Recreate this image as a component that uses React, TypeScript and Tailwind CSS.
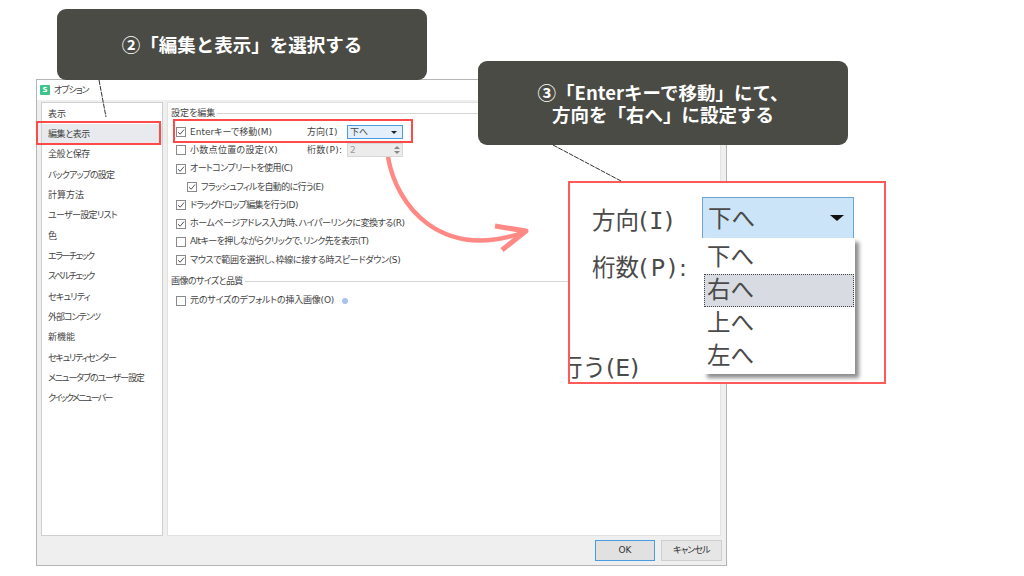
const jp = "font-['DejaVu_Sans','Noto_Sans_CJK_JP',sans-serif]";

// the reference's kana are much narrower than Noto's, so each label gets its own tracking
const navItems = [
  { label: "表示", track: "tracking-[0px]" },
  { label: "編集と表示", track: "tracking-[-0.4px]" },
  { label: "全般と保存", track: "tracking-[-0.4px]" },
  { label: "バックアップの設定", track: "tracking-[-0.9px]" },
  { label: "計算方法", track: "tracking-[0px]" },
  { label: "ユーザー設定リスト", track: "tracking-[-0.7px]" },
  { label: "色", track: "tracking-[0px]" },
  { label: "エラーチェック", track: "tracking-[-1.5px]" },
  { label: "スペルチェック", track: "tracking-[-1.4px]" },
  { label: "セキュリティ", track: "tracking-[-0.8px]" },
  { label: "外部コンテンツ", track: "tracking-[-1px]" },
  { label: "新機能", track: "tracking-[0px]" },
  { label: "セキュリティセンター", track: "tracking-[-1.2px]" },
  { label: "メニュータブのユーザー設定", track: "tracking-[-1.1px]" },
  { label: "クイックメニューバー", track: "tracking-[-1.7px]" },
];

function CheckBox({ checked }: { checked?: boolean }) {
  return (
    <span className="flex h-[10px] w-[10px] shrink-0 items-center justify-center border border-[#8a8a8a] bg-white">
      {checked && (
        <svg width="8" height="8" viewBox="0 0 8 8" fill="none">
          <path d="M1 4.2 L3.2 6.2 L7 1.6" stroke="#555" strokeWidth="1" />
        </svg>
      )}
    </span>
  );
}

function OptionRow({
  label,
  checked,
  indent,
  track,
}: {
  label: string;
  checked?: boolean;
  indent?: boolean;
  track: string;
}) {
  return (
    <div className={`flex h-[18.3px] items-center gap-[4px] ${indent ? "pl-[11px]" : ""}`}>
      <CheckBox checked={checked} />
      <span className={`whitespace-nowrap ${track}`}>{label}</span>
    </div>
  );
}

function SectionTitle({ title, track }: { title: string; track: string }) {
  return (
    <div className="flex items-center gap-[2px]">
      <span className={`whitespace-nowrap ${track}`}>{title}</span>
      <span className="h-px flex-1 bg-[#d5d5d5]" />
    </div>
  );
}

function OptionsWindow() {
  return (
    <div className="absolute left-[36px] top-[79px] flex h-[487px] w-[691px] flex-col border border-[#b5b5b5] bg-[#efefef] text-[9px] leading-none text-[#444] [font-feature-settings:'palt']">
      <div className="flex h-[20px] items-center gap-[4px] bg-white pl-[3px]">
        <span className="flex h-[10px] w-[10px] items-center justify-center rounded-[1px] bg-[#3cc48a] text-[7px] font-bold text-white">
          S
        </span>
        <span className="tracking-[-1px]">オプション</span>
      </div>

      <div className="flex flex-1 gap-[4px] pl-[4px] pr-[5px] pt-[2px]">
        <div className="flex h-[434px] w-[122px] flex-col border border-[#cfcfcf] bg-white pt-[1px]">
          {navItems.map((item, i) => (
            <div
              key={item.label}
              className={`flex h-[20.35px] items-center whitespace-nowrap pl-[6px] ${item.track} ${i === 1 ? "bg-[#e8eaed]" : ""}`}
            >
              {item.label}
            </div>
          ))}
        </div>

        <div className="h-[434px] flex-1 border border-[#e2e2e2] bg-white pl-[3px] pr-[1px] pt-[6px]">
          <SectionTitle title="設定を編集" track="tracking-[0px]" />
          <div className="mt-[5px] pl-[5px]">
            <div className="flex h-[18.3px] items-center">
              <div className="flex w-[131px] items-center gap-[4px]">
                <CheckBox checked />
                <span>Enterキーで移動(M)</span>
              </div>
              <span className="w-[40px]">
                方向(<span className="font-['DejaVu_Sans_Mono']">I</span>)
              </span>
              <div className="flex h-[14px] w-[56px] items-center justify-between border border-[#4a9be0] bg-[#e3f0fb] pl-[2px] pr-[5px]">
                <span>下へ</span>
                <span className="h-0 w-0 border-x-[3px] border-t-[3px] border-x-transparent border-t-[#222]" />
              </div>
            </div>
            <div className="flex h-[18.3px] items-center">
              <div className="flex w-[131px] items-center gap-[4px]">
                <CheckBox />
                <span className="tracking-[0.3px]">小数点位置の設定(X)</span>
              </div>
              <span className="w-[40px] whitespace-nowrap tracking-[0.3px]">桁数(P):</span>
              <div className="flex h-[14px] w-[56px] items-center justify-between border border-[#d8d8d8] bg-[#ececec] pl-[2px] pr-[2px] text-[#999]">
                <span>2</span>
                <span className="flex flex-col gap-[2px]">
                  <span className="h-0 w-0 border-x-[3px] border-b-[3px] border-x-transparent border-b-[#888]" />
                  <span className="h-0 w-0 border-x-[3px] border-t-[3px] border-x-transparent border-t-[#888]" />
                </span>
              </div>
            </div>
            <OptionRow checked label="オートコンプリートを使用(C)" track="tracking-[-0.6px]" />
            <OptionRow checked indent label="フラッシュフィルを自動的に行う(E)" track="tracking-[-0.65px]" />
            <OptionRow checked label="ドラッグドロップ編集を行う(D)" track="tracking-[-0.65px]" />
            <OptionRow checked label="ホームページアドレス入力時、ハイパーリンクに変換する(R)" track="tracking-[-0.48px]" />
            <OptionRow label="Altキーを押しながらクリックで、リンク先を表示(T)" track="tracking-[-0.58px]" />
            <OptionRow checked label="マウスで範囲を選択し、枠線に接する時スピードダウン(S)" track="tracking-[-0.32px]" />
          </div>
          <div className="mt-[8px]">
            <SectionTitle title="画像のサイズと品質" track="tracking-[-0.6px]" />
          </div>
          <div className="mt-[5px] flex h-[18.3px] items-center gap-[4px] pl-[5px]">
            <CheckBox />
            <span className="tracking-[-0.2px]">元のサイズのデフォルトの挿入画像(O)</span>
            <span className="ml-[4px] flex h-[6px] w-[6px] rounded-full bg-[#a8c4ec]" />
          </div>
        </div>
      </div>

      <div className="flex justify-end gap-[6px] pb-[4px] pr-[4px]">
        <button className="h-[21px] w-[60px] border border-[#4a9be0] bg-[#e1e1e1] text-[9px] text-[#333]">
          OK
        </button>
        <button className="h-[21px] w-[61px] border border-[#cfcfcf] bg-[#e6e6e6] text-[9px] tracking-[-0.8px] text-[#333]">
          キャンセル
        </button>
      </div>
    </div>
  );
}

function ZoomPanel() {
  return (
    <div className="absolute left-[568px] top-[181px] h-[203px] w-[318px] overflow-hidden border-2 border-[#ff5a5a] bg-white text-[23.5px] leading-none text-[#4a4a4a]">
      <span className="absolute left-[22px] top-[27px] whitespace-nowrap">
        方向<span className="tracking-[1px]">(<span className="font-['DejaVu_Sans_Mono']">I</span>)</span>
      </span>
      <span className="absolute left-[22px] top-[74px] whitespace-nowrap">
        桁数<span className="tracking-[2.5px]">(P):</span>
      </span>
      <span className="absolute left-[-11px] top-[174px] whitespace-nowrap">行う(E)</span>
      <div className="absolute left-[132px] top-[14px] flex h-[41px] w-[152px] items-center justify-between border-x border-t border-[#6aa5d6] bg-[#cce4f7] pb-[-2px] pl-[5px] pr-[9px] pt-[4px]">
        <span>下へ</span>
        <span className="mb-[4px] h-0 w-0 border-x-[7px] border-t-[6px] border-x-transparent border-t-[#111]" />
      </div>
      <div className="absolute left-[133px] top-[55px] w-[152px] bg-white pb-[1px] pt-[3px] shadow-[4px_4px_4px_rgba(0,0,0,0.45)]">
        <div className="flex h-[33px] items-center pl-[4px]">下へ</div>
        <div className="mx-[1px] flex h-[33px] items-center border border-dotted border-[#444] bg-[#d8dce2] pl-[2px]">右へ</div>
        <div className="flex h-[33px] items-center pl-[4px]">上へ</div>
        <div className="flex h-[33px] items-center pl-[4px]">左へ</div>
      </div>
    </div>
  );
}

export default function App() {
  return (
    <div className={`relative h-[576px] w-[1024px] overflow-hidden bg-white ${jp}`}>
      <OptionsWindow />

      {/* red highlight boxes over the dialog */}
      <div className="absolute left-[36px] top-[121px] h-[24px] w-[125px] border-2 border-[#ff4a4a]" />
      <div className="absolute left-[173px] top-[119px] h-[24px] w-[240px] border-2 border-[#ff4a4a]" />

      <ZoomPanel />

      <svg className="absolute left-0 top-0" width="1024" height="576" fill="none">
        <path d="M99 80 L106 117" stroke="#333" strokeDasharray="5 1" />
        <path d="M553 145 L621 181" stroke="#333" strokeDasharray="5 1" />
        <path d="M388 157 C 396 205, 440 262, 525 232" stroke="#ff8a85" strokeWidth="4.5" />
        <path d="M495 226 L526 231 L502 250" stroke="#ff8a85" strokeWidth="5" strokeLinejoin="round" />
      </svg>

      <div className="absolute left-[57px] top-[9px] flex h-[71px] w-[370px] items-center justify-center rounded-[9px] bg-[#4a4b44] font-['Noto_Sans_CJK_JP',sans-serif] text-[18.5px] font-semibold text-white">
        ②「編集と表示」を選択する
      </div>
      <div className="absolute left-[478px] top-[61px] flex h-[84px] w-[370px] flex-col items-center justify-center rounded-[9px] bg-[#4a4b44] text-center font-['Noto_Sans_CJK_JP',sans-serif] text-[18.5px] font-semibold leading-[22px] text-white">
        <span>③「Enterキーで移動」にて、</span>
        <span>方向を「右へ」に設定する</span>
      </div>
    </div>
  );
}
